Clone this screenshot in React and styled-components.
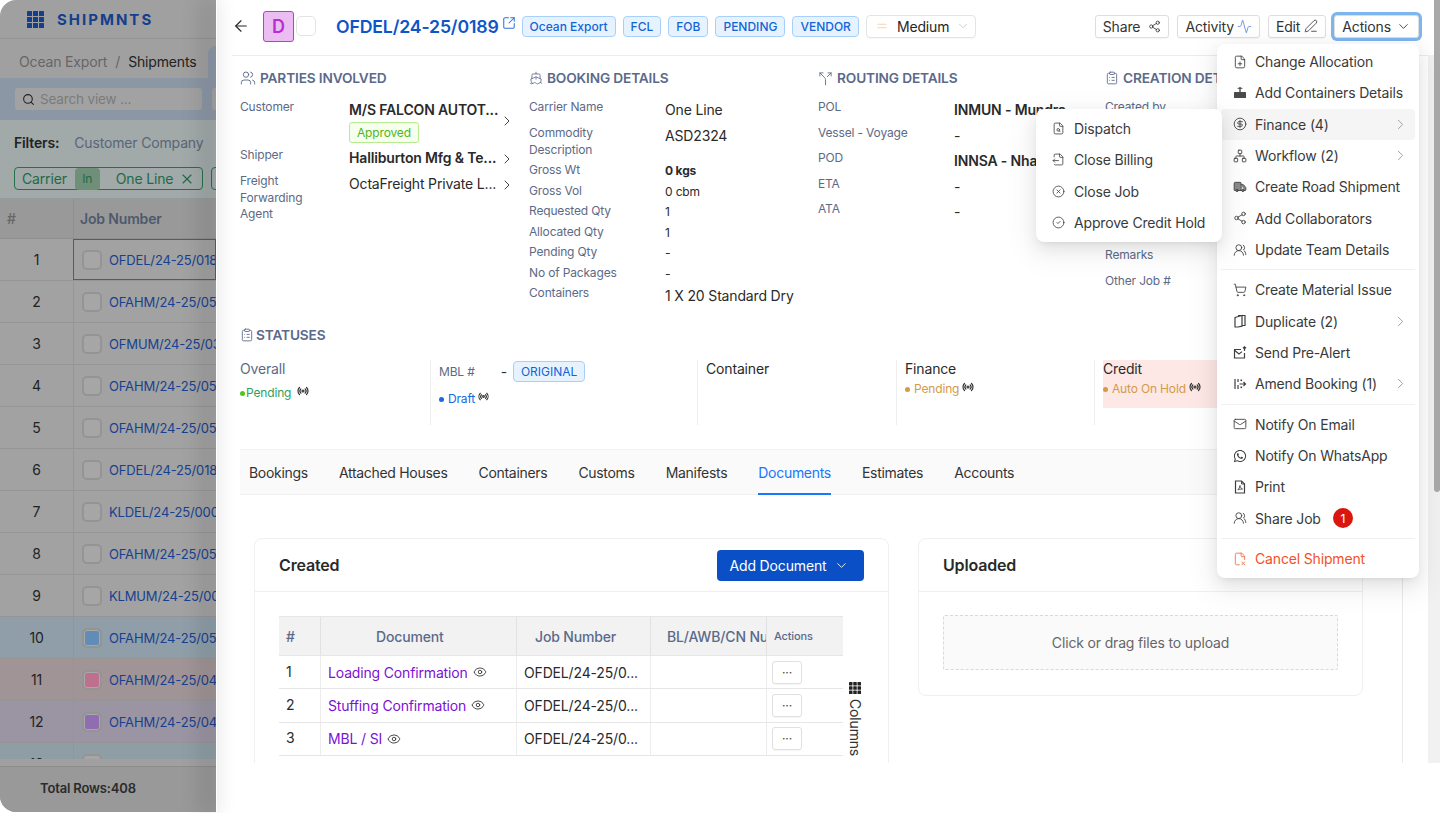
import React from "react";
import styled, { createGlobalStyle } from "styled-components";
import {
  ArrowLeft, SquareArrowOutUpRight, Users, Ship, Split, ClipboardList, Share2, Activity, PenLine,
  ChevronDown, ChevronRight, FilePlus, CircleDollarSign, Network, Truck, UsersRound, ShoppingCart,
  Mail, FileX2, FileSearch, FileOutput, CircleX, CircleCheck, Radio, Equal,
  Search, X, Eye,
} from "lucide-react";
import { FaWhatsapp } from "react-icons/fa";

const Global = createGlobalStyle`
  html, body { margin: 0; padding: 0; background: #fff; }
  * { box-sizing: border-box; }
  body { font-family: Inter, "Liberation Sans", sans-serif; color: #262626; letter-spacing: -0.01em; }
`;

const Screen = styled.div`
  position: relative;
  width: 1440px;
  height: 813px;
  overflow: hidden;
  display: flex;
  background: #fff;
`;

/* ---------- dimmed page behind the drawer ---------- */
const BackPage = styled.div`
  width: 216px;
  height: 812px;
  flex: none;
  display: flex;
  flex-direction: column;
  overflow: hidden;
  background: #a0a0a0;
  border-radius: 16px 0 0 16px;
`;
const BackTop = styled.div`
  height: 39px;
  flex: none;
  display: flex;
  align-items: center;
  gap: 13px;
  padding-left: 27px;
  border-bottom: 1px solid #939393;
`;
const GridLogo = styled.svg`
  display: block;
  flex: none;
`;
const Brand = styled.span`
  font-size: 15px;
  font-weight: 700;
  letter-spacing: 2px;
  color: #153f8c;
`;
const Crumbs = styled.div`
  height: 39px;
  flex: none;
  display: flex;
  align-items: center;
  padding: 6px 0 0 19px;
  font-size: 14px;
  color: #666;
  position: relative;
  gap: 8px;
  b { font-weight: 400; color: #222; }
`;
const CrumbTab = styled.div`
  position: absolute;
  left: 208px;
  top: 7px;
  width: 20px;
  height: 32px;
  background: #8c97a6;
  border-radius: 8px 0 0 0;
`;
const SearchBand = styled.div`
  height: 42px;
  flex: none;
  background: #8c97a6;
  display: flex;
  align-items: center;
  padding-left: 15px;
  gap: 10px;
`;
const SearchBox = styled.div`
  width: 187px;
  height: 22px;
  flex: none;
  border-radius: 3px;
  background: #a2a2a2;
  display: flex;
  align-items: center;
  gap: 5px;
  padding-left: 7px;
  font-size: 13.5px;
  color: #7b7b7b;
  svg { color: #222; }
`;
const SmallBox = styled.div`
  width: 20px;
  height: 22px;
  flex: none;
  border-radius: 3px;
  background: #a2a2a2;
`;
const FilterBand = styled.div`
  height: 79px;
  flex: none;
  background: #a1a9a9;
  padding: 10px 0 0 14px;
  border-bottom: 1px solid #949a9a;
`;
const FilterLine = styled.div`
  display: flex;
  align-items: center;
  height: 24px;
  font-size: 14px;
  white-space: nowrap;
  color: #5b6577;
  gap: 15px;
  b { font-weight: 600; color: #222; }
`;
const ChipRow = styled.div`
  display: flex;
  gap: 8px;
  margin-top: 13px;
`;
const Chip = styled.div`
  width: 189px;
  height: 23px;
  flex: none;
  border: 1px solid #26704a;
  border-radius: 4px;
  display: flex;
  align-items: center;
  padding-left: 7px;
  font-size: 14px;
  color: #1f6a48;
`;
const ChipIn = styled.span`
  width: 25px;
  height: 22px;
  margin-left: 8px;
  margin-right: 16px;
  background: #6f8f78;
  border-radius: 4px;
  font-size: 12px;
  display: flex;
  align-items: center;
  justify-content: center;
`;
const ChipClose = styled.span`
  display: flex;
  margin-left: 6px;
`;
const ChipStub = styled.div`
  width: 20px;
  height: 23px;
  flex: none;
  border: 1px solid #26704a;
  border-radius: 4px;
`;
const BackHead = styled.div`
  height: 40px;
  flex: none;
  background: #999;
  display: grid;
  grid-template-columns: 73px 1fr;
  align-items: center;
  font-size: 14px;
  font-weight: 600;
  color: #4e596d;
  border-bottom: 1px solid #8f8f8f;
`;
const HashCell = styled.span`
  padding-left: 7px;
  font-weight: 500;
  color: #666;
`;
const HeadCell = styled.span`
  height: 100%;
  display: flex;
  align-items: center;
  padding-left: 6px;
  border-left: 1px solid #909090;
`;
const BackRows = styled.div`
  height: 527px;
  flex: none;
  overflow: hidden;
  border-bottom: 7px solid #a0a0a0;
`;
const BackRow = styled.div`
  height: 42px;
  display: grid;
  grid-template-columns: 73px 1fr;
  align-items: center;
  background: ${(p) => p.$bg || "#a2a2a2"};
  border-bottom: 1px solid #959595;
  font-size: 13px;
`;
const RowNum = styled.span`
  text-align: center;
  color: #222;
  font-size: 14px;
`;
const JobCell = styled.div`
  height: 100%;
  display: flex;
  align-items: center;
  gap: 7px;
  padding-left: 8px;
  white-space: nowrap;
  overflow: hidden;
  color: #17418f;
  border-left: 1px solid #959595;
  outline: ${(p) => (p.$active ? "1px solid #3f5d9e" : "none")};
  outline-offset: -1px;
`;
const RowCheck = styled.span`
  width: 20px;
  height: 20px;
  flex: none;
  border-radius: 5px;
  border: 2px solid #949494;
  background: ${(p) => p.$fill || "#a6a6a6"};
  box-shadow: ${(p) => (p.$fill ? "inset 0 0 0 1px #a8a8a8" : "none")};
`;
const BackFoot = styled.div`
  flex: 1;
  display: flex;
  align-items: center;
  padding: 0 0 3px 40px;
  background: #999;
  border-top: 1px solid #8d8d8d;
  font-size: 13px;
  font-weight: 600;
  color: #2b2b2b;
`;

/* ---------- drawer ---------- */
const Drawer = styled.div`
  position: relative;
  flex: 1;
  height: 763px;
  background: #fff;
  overflow: hidden;
  padding: 0 12px 0 16px;
`;
const DrawerEdge = styled.div`
  position: absolute;
  left: 216px;
  top: 0;
  width: 1px;
  height: 813px;
  box-shadow: -8px 0 22px 3px rgba(0, 0, 0, 0.28);
`;
const Header = styled.header`
  height: 56px;
  display: flex;
  align-items: center;
  border-bottom: 1px solid #ececec;
  padding-bottom: 3px;
`;
const Back = styled.span`
  display: flex;
  margin-right: 13px;
  color: #262626;
`;
const Avatar = styled.span`
  width: 31px;
  height: 31px;
  flex: none;
  border-radius: 3px;
  border: 1px solid #c238d6;
  background: #ebbdf3;
  color: #b92ed0;
  font-size: 18px;
  font-weight: 600;
  display: flex;
  align-items: center;
  justify-content: center;
`;
const EmptyCheck = styled.span`
  width: 20px;
  height: 20px;
  flex: none;
  margin-left: 2px;
  border: 1px solid #e3e3e3;
  border-radius: 5px;
`;
const Title = styled.a`
  margin-left: 20px;
  font-size: 17.7px;
  font-weight: 600;
  color: #0d55c8;
  white-space: nowrap;
`;
const TitleLink = styled.span`
  display: flex;
  color: #2f74db;
  margin: -7px 6px 0 3px;
`;
const Tag = styled.span`
  height: 21px;
  display: inline-flex;
  align-items: center;
  padding: 0 7px;
  margin-right: 7px;
  border: 1px solid #a7d1fa;
  border-radius: 4px;
  background: #e6f3ff;
  color: #1464d6;
  font-size: 12px;
  font-weight: 500;
  letter-spacing: 0;
  white-space: nowrap;
`;
const Priority = styled.span`
  width: 110px;
  height: 23px;
  flex: none;
  display: flex;
  align-items: center;
  border: 1px solid #e4e4e4;
  border-radius: 4px;
  font-size: 14px;
  padding-left: 8px;
  box-shadow: 0 1px 1px rgba(0, 0, 0, 0.03);
  svg:first-child { color: #f6d3b0; margin-right: 8px; }
  svg:last-child { color: #bfbfbf; margin-left: 7px; }
`;
const HeadActions = styled.div`
  margin-left: auto;
  display: flex;
  gap: 8px;
  margin-right: 9px;
`;
const ActionBtn = styled.button`
  height: 23px;
  display: flex;
  align-items: center;
  gap: ${(p) => p.$gap || 5}px;
  padding: 0 7px;
  background: #fff;
  border: 1px solid #dedede;
  border-radius: 3px;
  font: 400 14px Inter, sans-serif;
  letter-spacing: -0.01em;
  color: #333;
  box-shadow: ${(p) => (p.$focus ? "0 0 0 3px #7db5ef" : "0 1px 1px rgba(0,0,0,.04)")};
  svg { color: ${(p) => p.$icon || "#333"}; }
`;
const Details = styled.section`
  display: grid;
  grid-template-columns: 289px 289px 287px 1fr;
  padding: 11px 0 0 8px;
  height: 268px;
`;
const SectionTitle = styled.h3`
  margin: 0 0 ${(p) => (p.$flush ? 0 : 10)}px;
  height: 22px;
  display: flex;
  align-items: center;
  gap: ${(p) => p.$gap || 4}px;
  font-size: 13.7px;
  font-weight: 600;
  color: #5b6a8a;
  white-space: nowrap;
  svg { color: #5b6a8a; flex: none; }
`;
const Field = styled.div`
  display: grid;
  grid-template-columns: ${(p) => p.$label || 136}px 1fr;
  height: ${(p) => p.$h}px;
  align-items: start;
`;
const Label = styled.span`
  max-width: 104px;
  font-size: 12px;
  line-height: 16.7px;
  color: #5c6a86;
`;
const Value = styled.span`
  font-size: ${(p) => p.$size || 14}px;
  font-weight: ${(p) => p.$weight || 400};
  line-height: ${(p) => (p.$size === 12 ? "17px" : "22px")};
  color: #2a2a2a;
  white-space: nowrap;
`;
const Party = styled.div`
  display: flex;
  width: 165px;
  justify-content: space-between;
  align-items: ${(p) => (p.$center ? "center" : "flex-start")};
  svg { flex: none; margin-top: ${(p) => (p.$center ? "0" : "4px")}; margin-right: -1px; color: #333; }
`;
const Approved = styled.span`
  display: inline-flex;
  align-items: center;
  height: 21px;
  margin-top: 1px;
  padding: 0 7px;
  border: 1px solid #b7eb8f;
  border-radius: 3px;
  background: #f6ffed;
  color: #52b520;
  font-size: 12px;
`;
const Stack = styled.div`
  display: flex;
  flex-direction: column;
  align-items: flex-start;
`;
const StatusBlock = styled.section`
  padding-left: 8px;
`;
const StatusRow = styled.div`
  display: grid;
  grid-template-columns: 191px 267px 199px 198px 1fr;
  height: 65px;
  margin-top: 14px;
`;
const StatusCell = styled.div`
  padding-left: ${(p) => (p.$first ? 0 : 8)}px;
  border-left: ${(p) => (p.$first ? "none" : "1px solid #eee")};
  margin-left: ${(p) => (p.$first ? 0 : -1)}px;
`;
const Credit = styled.div`
  width: 150px;
  height: 48px;
  background: #fde8e6;
`;
const StatusName = styled.div`
  font-size: 14px;
  line-height: 18px;
  color: ${(p) => p.$color || "#2a2a2a"};
`;
const MblLine = styled.div`
  display: flex;
  align-items: center;
  height: 21px;
  margin-top: 1px;
  font-size: 12px;
  color: #5c6a86;
`;
const MblDash = styled.span`
  margin-left: 26px;
  margin-right: 6px;
  font-size: 14px;
  color: #333;
`;
const Original = styled(Tag)`
  font-weight: 400;
  margin: 0;
`;
const StatusValue = styled.div`
  display: flex;
  align-items: center;
  gap: ${(p) => p.$gap ?? 4}px;
  margin-top: ${(p) => p.$top || 4}px;
  font-size: 12px;
  line-height: 14px;
  color: ${(p) => p.$color};
  svg { color: #333; margin: -5px 0 0 ${(p) => p.$icon ?? -1}px; flex: none; }
`;
const Dot = styled.i`
  width: 5px;
  height: 5px;
  border-radius: 50%;
  flex: none;
  background: ${(p) => p.$color};
`;
const Tabs = styled.nav`
  display: flex;
  gap: 31px;
  height: 46px;
  margin: 24px 12px 0 8px;
  padding: 0 0 0 9px;
  background: #fafafa;
  border-top: 1px solid #f2f2f2;
  border-bottom: 1px solid #f0f0f0;
`;
const TabItem = styled.span`
  display: flex;
  align-items: center;
  height: 45px;
  padding-top: 1px;
  font-size: 14px;
  letter-spacing: -0.3px;
  color: ${(p) => (p.$active ? "#1677ff" : "#333")};
  border-bottom: 2px solid ${(p) => (p.$active ? "#1677ff" : "transparent")};
`;
const TabBody = styled.div`
  width: 1163px;
  margin-left: 8px;
  border-right: 1px solid #eaeaea;
  height: 300px;
  padding: 43px 0 0 14px;
  display: flex;
  gap: 29px;
  align-items: flex-start;
`;
const Card = styled.div`
  width: ${(p) => p.$w}px;
  height: ${(p) => p.$h || 400}px;
  flex: none;
  border: 1px solid #f0f0f0;
  border-radius: 8px;
`;
const CardHead = styled.div`
  height: 53px;
  display: flex;
  align-items: center;
  justify-content: space-between;
  padding: 0 24px;
  border-bottom: 1px solid #f0f0f0;
  font-size: 16px;
  font-weight: 600;
  color: #2a2a2a;
`;
const AddBtn = styled.button`
  width: 147px;
  height: 31px;
  display: flex;
  align-items: center;
  justify-content: center;
  gap: 7px;
  padding-left: 3px;
  background: #0a4fc6;
  color: #fff;
  border: none;
  border-radius: 4px;
  font: 400 14px Inter, sans-serif;
  letter-spacing: -0.01em;
`;
const TableWrap = styled.div`
  display: flex;
  padding: 24px 0 0 24px;
`;
const Table = styled.div`
  width: 564px;
  flex: none;
`;
const columns = "41px 196px 134px 116px 77px";
const THead = styled.div`
  display: grid;
  grid-template-columns: ${columns};
  height: 40px;
  background: #f2f2f2;
  border-top: 1px solid #e6e6e6;
  border-bottom: 1px solid #e6e6e6;
`;
const Th = styled.div`
  display: flex;
  align-items: center;
  padding-left: ${(p) => p.$pad ?? 7}px;
  font-size: ${(p) => p.$size || 14}px;
  font-weight: 500;
  color: #5b6a8a;
  white-space: nowrap;
  overflow: hidden;
  & + & { border-left: 1px solid #e2e2e2; }
`;
const TRow = styled.div`
  display: grid;
  grid-template-columns: ${columns};
  height: 33.3px;
  border-bottom: 1px solid #e6e6e6;
`;
const Td = styled.div`
  display: flex;
  align-items: center;
  padding-left: 7px;
  font-size: 14px;
  color: #2a2a2a;
  white-space: nowrap;
  & + & { border-left: 1px solid #ececec; }
`;
const RowIndex = styled(Td)`
  padding-bottom: 2px;
`;
const DocLink = styled.a`
  color: #7a12d4;
  display: flex;
  align-items: center;
  gap: 5px;
  svg { color: #333; }
`;
const MoreBtn = styled.span`
  width: 30px;
  height: 23px;
  margin-left: -2px;
  border: 1px solid #e0e0e0;
  border-radius: 3px;
  display: flex;
  align-items: center;
  justify-content: center;
  font-size: 12px;
  color: #444;
  box-shadow: 0 1px 1px rgba(0, 0, 0, 0.04);
`;
const ColumnsToggle = styled.div`
  display: flex;
  flex-direction: column;
  align-items: center;
  gap: 5px;
  margin: 66px 0 0 5px;
  span {
    writing-mode: vertical-rl;
    font-size: 14px;
    line-height: 14px;
    color: #333;
  }
`;
const UploadBody = styled.div`
  padding: 23px 24px 0;
`;
const Dragger = styled.div`
  height: 55px;
  display: flex;
  align-items: center;
  justify-content: center;
  background: #fafafa;
  border: 1px dashed #d9d9d9;
  border-radius: 2px;
  font-size: 14px;
  color: #666;
`;
const ScrollTrack = styled.div`
  position: absolute;
  left: 1428px;
  top: 55px;
  width: 12px;
  height: 708px;
  background: #f1f1f1;
`;
const ScrollThumb = styled.div`
  position: absolute;
  left: 1434px;
  top: 0;
  width: 6px;
  height: 492px;
  background: #a9a9a9;
  border-radius: 0 0 3px 3px;
`;

/* ---------- menus ---------- */
const Menu = styled.div`
  position: absolute;
  left: ${(p) => p.$x}px;
  top: ${(p) => p.$y}px;
  width: ${(p) => p.$w}px;
  padding: ${(p) => p.$pt}px 4px 4px;
  background: #fff;
  border-radius: 8px;
  box-shadow: 0 6px 16px rgba(0, 0, 0, 0.08), 0 3px 6px -4px rgba(0, 0, 0, 0.12), 0 9px 28px 8px rgba(0, 0, 0, 0.05);
  z-index: ${(p) => p.$z || 5};
`;
const MenuItem = styled.div`
  height: 31.33px;
  display: flex;
  align-items: center;
  padding-left: 12px;
  gap: ${(p) => p.$gap || 8}px;
  border-radius: 4px;
  font-size: 14px;
  color: ${(p) => (p.$danger ? "#f4511e" : "#3a3a3a")};
  background: ${(p) => (p.$hover ? "#f5f5f5" : "transparent")};
  white-space: nowrap;
  & > svg:first-child { flex: none; color: ${(p) => (p.$danger ? "#f4703e" : "#3f3f3f")}; }
`;
const SubArrow = styled(ChevronRight)`
  margin-left: auto;
  margin-right: 6px;
  color: #9a9a9a;
`;
const Divider = styled.div`
  height: 1px;
  background: #f0f0f0;
  margin: 4px 0 4px;
`;
const Badge = styled.span`
  width: 20px;
  height: 20px;
  margin-left: 4px;
  border-radius: 50%;
  background: #d9170f;
  color: #fff;
  font-size: 12px;
  display: flex;
  align-items: center;
  justify-content: center;
`;

const Squares = ({ size = 17, color = "#153f8c" }) => {
  const c = size / 3.4;
  const step = (size - c) / 2;
  const cells = [];
  for (let r = 0; r < 3; r++) for (let q = 0; q < 3; q++) cells.push(<rect key={`${r}${q}`} x={q * step} y={r * step} width={c} height={c} rx="0.5" fill={color} />);
  return <GridLogo width={size} height={size} viewBox={`0 0 ${size} ${size}`}>{cells}</GridLogo>;
};

const ContainerIcon = () => (
  <svg width="14" height="13" viewBox="0 0 14 13" fill="#4a4a4a">
    <rect x="1" y="6" width="12" height="6" rx="0.5" />
    <rect x="6.3" y="1" width="1.4" height="5" />
    <rect x="4.6" y="1.8" width="4.8" height="1" />
  </svg>
);
const PdfIcon = () => (
  <svg width="14" height="14" viewBox="0 0 14 14" fill="none" stroke="#3f3f3f" strokeWidth="1.2">
    <path d="M2.5 1h6l3 3v9h-9z" />
    <path d="M8.5 1v3h3M7 5.5c-.4 1.8-1.1 3.4-2.1 4.6M7 5.5c.4 1.7 1.1 3 2.6 3.6M5.2 9.8c1.3-.7 2.6-.8 4.2-.6" strokeWidth="0.9" />
  </svg>
);
const DuplicateIcon = () => (
  <svg width="14" height="14" viewBox="0 0 14 14" fill="none" stroke="#3f3f3f" strokeWidth="1.2">
    <path d="M5 1.5h7v10H9" />
    <path d="M2 3.5l7-2v10.7L5 13H2z" />
  </svg>
);
const PreAlertIcon = () => (
  <svg width="14" height="14" viewBox="0 0 14 14" fill="none" stroke="#3f3f3f" strokeWidth="1.2">
    <path d="M8 3.5H1.5v8.5h10V7" />
    <path d="M1.8 4.5 6 8l3-2.4" />
    <path d="M11.5 5V1M10 2.3l1.5-1.4L13 2.3" />
  </svg>
);
const AmendIcon = () => (
  <svg width="14" height="14" viewBox="0 0 14 14" fill="none" stroke="#3f3f3f" strokeWidth="1.2">
    <path d="M2 2v10M5 2v3M5 8v4" />
    <rect x="7.5" y="2.5" width="1.6" height="1.6" fill="#3f3f3f" stroke="none" />
    <rect x="7.5" y="9.5" width="1.6" height="1.6" fill="#3f3f3f" stroke="none" />
    <path d="M6.5 7h6M10.5 5l2 2-2 2" />
  </svg>
);

const rows = [
  ["1", "OFDEL/24-25/0189"], ["2", "OFAHM/24-25/0512"], ["3", "OFMUM/24-25/0321"], ["4", "OFAHM/24-25/0510"],
  ["5", "OFAHM/24-25/0509"], ["6", "OFDEL/24-25/0188"], ["7", "KLDEL/24-25/0003"], ["8", "OFAHM/24-25/0508"],
  ["9", "KLMUM/24-25/0004"], ["10", "OFAHM/24-25/0507", "#8f9ea8", "#5f8db8"], ["11", "OFAHM/24-25/0499", "#a09497", "#c0708f"],
  ["12", "OFAHM/24-25/0498", "#9b95a3", "#8f6db0"], ["13", "OFAHM/24-25/0497", "#8f9ea5"],
];

const bookingFields = [
  ["Carrier Name", "One Line", 26],
  ["Commodity Description", "ASD2324", 37],
  ["Gross Wt", "0 kgs", 20.5, 12, 700],
  ["Gross Vol", "0 cbm", 20.5, 12],
  ["Requested Qty", "1", 20.5, 12],
  ["Allocated Qty", "1", 20.5, 12],
  ["Pending Qty", "-", 20.5, 12],
  ["No of Packages", "-", 20.5, 12],
  ["Containers", "1 X 20 Standard Dry", 24],
];
const routingFields = [
  ["POL", "INMUN - Mundra", 25.5, 14, 600],
  ["Vessel - Voyage", "-", 25.5],
  ["POD", "INNSA - Nhava Sheva", 25.5, 14, 600],
  ["ETA", "-", 25.5],
  ["ATA", "-", 25.5],
];
const creationLabels = [["Created by", 148], ["Remarks", 26], ["Other Job #", 26]];
const docs = [["1", "Loading Confirmation"], ["2", "Stuffing Confirmation"], ["3", "MBL / SI"]];

const I = { size: 14, strokeWidth: 1.5 };
const R = { size: 12, strokeWidth: 2.4 };

const mainMenu = [
  [[<FilePlus {...I} />, "Change Allocation"], [<ContainerIcon />, "Add Containers Details"], [<CircleDollarSign {...I} />, "Finance (4)", true, true], [<Network {...I} />, "Workflow (2)", true], [<Truck size={14} strokeWidth={1.5} fill="#8a8a8a" />, "Create Road Shipment"], [<Share2 {...I} />, "Add Collaborators"], [<UsersRound {...I} />, "Update Team Details"]],
  [[<ShoppingCart {...I} />, "Create Material Issue"], [<DuplicateIcon />, "Duplicate (2)", true], [<PreAlertIcon />, "Send Pre-Alert"], [<AmendIcon />, "Amend Booking (1)", true]],
  [[<Mail {...I} />, "Notify On Email"], [<FaWhatsapp size={14} />, "Notify On WhatsApp"], [<PdfIcon />, "Print"]],
];
const subMenu = [
  [<FileSearch size={13} strokeWidth={1.5} />, "Dispatch"],
  [<FileOutput size={13} strokeWidth={1.5} />, "Close Billing"],
  [<CircleX size={13} strokeWidth={1.5} />, "Close Job"],
  [<CircleCheck size={13} strokeWidth={1.5} />, "Approve Credit Hold"],
];

export default function App() {
  return (
    <Screen>
      <Global />
      <BackPage>
        <BackTop>
          <Squares />
          <Brand>SHIPMNTS</Brand>
        </BackTop>
        <Crumbs>
          Ocean Export <span>/</span> <b>Shipments</b>
          <CrumbTab />
        </Crumbs>
        <SearchBand>
          <SearchBox><Search size={13} />Search view ...</SearchBox>
          <SmallBox />
        </SearchBand>
        <FilterBand>
          <FilterLine><b>Filters:</b>Customer Company</FilterLine>
          <ChipRow>
            <Chip>Carrier<ChipIn>In</ChipIn>One Line<ChipClose><X size={16} strokeWidth={1.6} /></ChipClose></Chip>
            <ChipStub />
          </ChipRow>
        </FilterBand>
        <BackHead><HashCell>#</HashCell><HeadCell>Job Number</HeadCell></BackHead>
        <BackRows>
          {rows.map(([n, job, bg, fill]) => (
            <BackRow key={n} $bg={bg}>
              <RowNum>{n}</RowNum>
              <JobCell $active={n === "1"}><RowCheck $fill={fill} />{job}</JobCell>
            </BackRow>
          ))}
        </BackRows>
        <BackFoot>Total Rows:408</BackFoot>
      </BackPage>

      <Drawer>
        <Header>
          <Back><ArrowLeft size={18} strokeWidth={1.5} /></Back>
          <Avatar>D</Avatar>
          <EmptyCheck />
          <Title>OFDEL/24-25/0189</Title>
          <TitleLink><SquareArrowOutUpRight size={14} strokeWidth={1.8} /></TitleLink>
          {["Ocean Export", "FCL", "FOB", "PENDING", "VENDOR"].map((t) => <Tag key={t}>{t}</Tag>)}
          <Priority><Equal size={14} />Medium<ChevronDown size={14} strokeWidth={1.3} /></Priority>
          <HeadActions>
            <ActionBtn $gap={8}>Share<Share2 size={13} strokeWidth={1.5} /></ActionBtn>
            <ActionBtn $icon="#4a7fd0" $gap={3}>Activity<Activity size={15} strokeWidth={1.2} /></ActionBtn>
            <ActionBtn $gap={4}>Edit<PenLine size={14} strokeWidth={1.4} /></ActionBtn>
            <ActionBtn $focus $gap={5}>Actions<ChevronDown size={15} strokeWidth={1.4} /></ActionBtn>
          </HeadActions>
        </Header>

        <Details>
          <div>
            <SectionTitle><Users size={16} strokeWidth={1.4} />PARTIES INVOLVED</SectionTitle>
            <Field $label={109} $h={48}>
              <Label>Customer</Label>
              <Party $center>
                <Stack><Value $weight={600}>M/S FALCON AUTOT...</Value><Approved>Approved</Approved></Stack>
                <ChevronRight size={16} strokeWidth={1.4} />
              </Party>
            </Field>
            <Field $label={109} $h={26}>
              <Label>Shipper</Label>
              <Party><Value $weight={600}>Halliburton Mfg &amp; Te...</Value><ChevronRight size={16} strokeWidth={1.4} /></Party>
            </Field>
            <Field $label={109} $h={52}>
              <Label>Freight<br />Forwarding<br />Agent</Label>
              <Party><Value>OctaFreight Private L...</Value><ChevronRight size={16} strokeWidth={1.4} /></Party>
            </Field>
          </div>
          <div>
            <SectionTitle><Ship size={14} strokeWidth={1.4} />BOOKING DETAILS</SectionTitle>
            {bookingFields.map(([l, v, h, s, w]) => (
              <Field key={l} $h={h}>
                <Label>{l}</Label>
                <Value $size={s} $weight={w}>{v}</Value>
              </Field>
            ))}
          </div>
          <div>
            <SectionTitle><Split size={15} strokeWidth={1.4} />ROUTING DETAILS</SectionTitle>
            {routingFields.map(([l, v, h, s, w]) => (
              <Field key={l} $h={h}>
                <Label>{l}</Label>
                <Value $size={s} $weight={w}>{v}</Value>
              </Field>
            ))}
          </div>
          <div>
            <SectionTitle><ClipboardList size={14} strokeWidth={1.5} />CREATION DETAILS</SectionTitle>
            {creationLabels.map(([l, h]) => (
              <Field key={l} $h={h}><Label>{l}</Label><Value /></Field>
            ))}
          </div>
        </Details>

        <StatusBlock>
          <SectionTitle $flush $gap={2}><ClipboardList size={14} strokeWidth={1.5} />STATUSES</SectionTitle>
          <StatusRow>
            <StatusCell $first>
              <StatusName $color="#5c6a86">Overall</StatusName>
              <StatusValue $color="#2f9e5e" $gap={1} $top={8} $icon={5}><Dot $color="#52c41a" />Pending<Radio {...R} /></StatusValue>
            </StatusCell>
            <StatusCell>
              <MblLine>MBL #<MblDash>-</MblDash><Original>ORIGINAL</Original></MblLine>
              <StatusValue $color="#1668e3" $top={10}><Dot $color="#1668e3" />Draft<Radio {...R} size={11} /></StatusValue>
            </StatusCell>
            <StatusCell><StatusName>Container</StatusName></StatusCell>
            <StatusCell>
              <StatusName>Finance</StatusName>
              <StatusValue $color="#d39a4a"><Dot $color="#d39a4a" />Pending<Radio {...R} /></StatusValue>
            </StatusCell>
            <StatusCell>
              <Credit>
                <StatusName>Credit</StatusName>
                <StatusValue $color="#d39a4a"><Dot $color="#d39a4a" />Auto On Hold<Radio {...R} /></StatusValue>
              </Credit>
            </StatusCell>
          </StatusRow>
        </StatusBlock>

        <Tabs>
          {["Bookings", "Attached Houses", "Containers", "Customs", "Manifests", "Documents", "Estimates", "Accounts"].map((t) => (
            <TabItem key={t} $active={t === "Documents"}>{t}</TabItem>
          ))}
        </Tabs>

        <TabBody>
          <Card $w={635}>
            <CardHead>Created<AddBtn>Add Document<ChevronDown size={15} strokeWidth={1.4} /></AddBtn></CardHead>
            <TableWrap>
              <Table>
                <THead>
                  <Th>#</Th><Th $pad={55}>Document</Th><Th $pad={18}>Job Number</Th><Th $pad={16}>BL/AWB/CN Number</Th><Th $size={11}>Actions</Th>
                </THead>
                {docs.map(([n, d]) => (
                  <TRow key={n}>
                    <RowIndex>{n}</RowIndex>
                    <Td><DocLink>{d}<Eye size={14} strokeWidth={1.5} /></DocLink></Td>
                    <Td>OFDEL/24-25/0...</Td>
                    <Td />
                    <Td><MoreBtn>···</MoreBtn></Td>
                  </TRow>
                ))}
              </Table>
              <ColumnsToggle><Squares size={12} color="#222" /><span>Columns</span></ColumnsToggle>
            </TableWrap>
          </Card>
          <Card $w={445} $h={158}>
            <CardHead>Uploaded</CardHead>
            <UploadBody><Dragger>Click or drag files to upload</Dragger></UploadBody>
          </Card>
        </TabBody>
      </Drawer>
      <DrawerEdge />
      <ScrollTrack />
      <ScrollThumb />

      <Menu $x={1036} $y={109} $w={186} $pt={4} $z={6}>
        {subMenu.map(([icon, label]) => (
          <MenuItem key={label} $gap={9}>{icon}{label}</MenuItem>
        ))}
      </Menu>

      <Menu $x={1217} $y={44} $w={202} $pt={2}>
        {mainMenu.map((group, g) => (
          <React.Fragment key={g}>
            {group.map(([icon, label, sub, hover]) => (
              <MenuItem key={label} $hover={hover}>
                {icon}
                {label}
                {sub && <SubArrow size={17} strokeWidth={1.3} />}
              </MenuItem>
            ))}
            {g === 2 && (
              <MenuItem><UsersRound {...I} />Share Job<Badge>1</Badge></MenuItem>
            )}
            <Divider />
          </React.Fragment>
        ))}
        <MenuItem $danger><FileX2 {...I} />Cancel Shipment</MenuItem>
      </Menu>
    </Screen>
  );
}
